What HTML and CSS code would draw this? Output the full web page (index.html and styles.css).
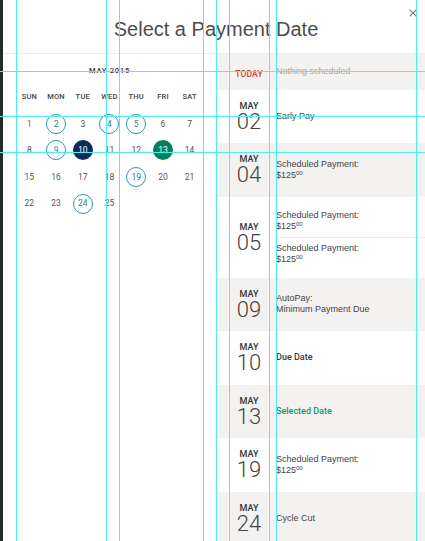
FILE: index.html
```html
<!DOCTYPE html>
<html lang="en">
<head>
<meta charset="utf-8">
<title>Select a Payment Date</title>
<link rel="stylesheet" href="styles.css">
</head>
<body>
<div class="modal">
  <header class="modal-header">
    <span class="spacer"></span>
    <h1 class="title">Select a Payment Date</h1>
    <button class="close" aria-label="Close">
      <svg width="8" height="8" viewBox="0 0 8 8"><path d="M0.6 0.6L7.4 7.4M7.4 0.6L0.6 7.4" stroke="#7a7a7a" stroke-width="1.1" fill="none"/></svg>
    </button>
  </header>
  <div class="modal-body">
    <section class="calendar">
      <div class="month">MAY 2015</div>
      <div class="cal-grid">
        <div class="wd">SUN</div><div class="wd">MON</div><div class="wd">TUE</div><div class="wd">WED</div><div class="wd">THU</div><div class="wd">FRI</div><div class="wd">SAT</div>
        <div class="day"><span class="num red">1</span></div>
        <div class="day"><span class="num mark">2</span></div>
        <div class="day"><span class="num">3</span></div>
        <div class="day"><span class="num mark">4</span></div>
        <div class="day"><span class="num mark">5</span></div>
        <div class="day"><span class="num">6</span></div>
        <div class="day"><span class="num">7</span></div>
        <div class="day"><span class="num">8</span></div>
        <div class="day"><span class="num mark">9</span></div>
        <div class="day"><span class="num due">10</span></div>
        <div class="day"><span class="num">11</span></div>
        <div class="day"><span class="num">12</span></div>
        <div class="day"><span class="num chosen">13</span></div>
        <div class="day"><span class="num">14</span></div>
        <div class="day"><span class="num">15</span></div>
        <div class="day"><span class="num">16</span></div>
        <div class="day"><span class="num">17</span></div>
        <div class="day"><span class="num">18</span></div>
        <div class="day"><span class="num mark">19</span></div>
        <div class="day"><span class="num">20</span></div>
        <div class="day"><span class="num">21</span></div>
        <div class="day"><span class="num">22</span></div>
        <div class="day"><span class="num">23</span></div>
        <div class="day"><span class="num mark">24</span></div>
        <div class="day"><span class="num">25</span></div>
      </div>
    </section>
    <section class="schedule">
      <div class="row today-row">
        <div class="date"><span class="today-label">TODAY</span></div>
        <div class="events"><div class="event muted">Nothing scheduled</div></div>
      </div>
      <div class="row">
        <div class="date"><span class="d-mon">MAY</span><span class="d-num">02</span></div>
        <div class="events"><div class="event">Early Pay</div></div>
      </div>
      <div class="row">
        <div class="date"><span class="d-mon">MAY</span><span class="d-num">04</span></div>
        <div class="events"><div class="event">Scheduled Payment:<br>$125<sup class="cents">00</sup></div></div>
      </div>
      <div class="row">
        <div class="date"><span class="d-mon">MAY</span><span class="d-num">05</span></div>
        <div class="events">
          <div class="event">Scheduled Payment:<br>$125<sup class="cents">00</sup></div>
          <div class="event">Scheduled Payment:<br>$125<sup class="cents">00</sup></div>
        </div>
      </div>
      <div class="row">
        <div class="date"><span class="d-mon">MAY</span><span class="d-num">09</span></div>
        <div class="events"><div class="event">AutoPay:<br>Minimum Payment Due</div></div>
      </div>
      <div class="row">
        <div class="date"><span class="d-mon">MAY</span><span class="d-num">10</span></div>
        <div class="events"><div class="event strong">Due Date</div></div>
      </div>
      <div class="row">
        <div class="date"><span class="d-mon">MAY</span><span class="d-num">13</span></div>
        <div class="events"><div class="event selected">Selected Date</div></div>
      </div>
      <div class="row">
        <div class="date"><span class="d-mon">MAY</span><span class="d-num">19</span></div>
        <div class="events"><div class="event">Scheduled Payment:<br>$125<sup class="cents">00</sup></div></div>
      </div>
      <div class="row">
        <div class="date"><span class="d-mon">MAY</span><span class="d-num">24</span></div>
        <div class="events"><div class="event">Cycle Cut</div></div>
      </div>
    </section>
  </div>
</div>
<div class="guides" aria-hidden="true">
  <div class="gv gv1"></div><div class="gv gv2"></div><div class="gv gv3"></div>
  <div class="gv gv4"></div><div class="gv gv5"></div><div class="gv gv6"></div>
  <div class="gv gv7"></div><div class="gv gv8"></div><div class="gv gv9"></div>
  <div class="gh gh1"></div><div class="gh gh2"></div><div class="gh gh3"></div>
</div>
</body>
</html>
```

FILE: styles.css
```css
html, body {
  margin: 0;
  height: 100%;
  overflow: hidden;
}
body {
  background: #1f2a2c;
  font-family: "Liberation Sans", Arial, sans-serif;
}
.modal {
  margin-left: 3px;
  width: 426px;
  height: 541px;
  background: #fff;
  overflow: hidden;
}
.modal-header {
  height: 53px;
  border-bottom: 1px solid #ebebeb;
  display: grid;
  grid-template-columns: 1fr auto 1fr;
}
.title {
  margin: 18px 0 0;
  font-size: 20px;
  line-height: 23px;
  font-weight: normal;
  color: #4d4d4d;
  white-space: nowrap;
}
.close {
  justify-self: end;
  align-self: start;
  margin: 9px 12px 0 0;
  padding: 0;
  border: 0;
  background: none;
  width: 8px;
  height: 8px;
  display: block;
}
.close svg { display: block; }

.modal-body {
  display: flex;
}
.calendar {
  width: 213px;
  flex: none;
  box-sizing: border-box;
  padding: 10px 13px 0;
}
.month {
  text-align: center;
  font: 500 7.5px/14px Roboto, sans-serif;
  letter-spacing: 0.8px;
  color: #333;
  margin-bottom: 6px;
}
.cal-grid {
  display: grid;
  grid-template-columns: repeat(7, 1fr);
  grid-auto-rows: 26.6px;
  align-items: center;
  justify-items: center;
}
.wd {
  font: 500 7.5px/10px Roboto, sans-serif;
  color: #444;
  letter-spacing: 0.2px;
}
.num {
  width: 20px;
  height: 20px;
  box-sizing: border-box;
  border-radius: 50%;
  display: flex;
  align-items: center;
  justify-content: center;
  font: 400 8.5px/1 Roboto, sans-serif;
  color: #555;
}
.num.red { color: #c8442b; }
.num.mark {
  border: 1px solid #2d95b6;
  color: #1b7fa3;
}
.num.due {
  background: #0c2b5c;
  color: #fff;
}
.num.chosen {
  background: #00805f;
  color: #fff;
}

.schedule {
  flex: 1;
}
.row {
  display: flex;
  align-items: center;
  min-height: 53.5px;
}
.row:nth-child(odd) { background: #f3f2f0; }
.row.today-row { min-height: 35.5px; }
.date {
  flex: none;
  width: 40px;
  margin-left: 13px;
  text-align: center;
}
.d-mon {
  display: block;
  font: 500 9px/10px Roboto, sans-serif;
  color: #333;
}
.d-num {
  display: block;
  font: 300 22px/21px Roboto, sans-serif;
  color: #444;
}
.today-label {
  font: 500 8.5px/11px Roboto, sans-serif;
  color: #c8442b;
  letter-spacing: 0.2px;
}
.events {
  flex: 1;
  margin-left: 7px;
}
.event {
  padding: 5px 0;
  font-size: 9px;
  line-height: 11px;
  color: #444;
}
.event:first-child { padding-top: 13px; }
.event:last-child { padding-bottom: 13px; }
.event + .event { border-top: 1px solid #e9e9e9; }
.today-row .event { padding: 0; }
.event.muted { color: #a8a6a3; }
.event.strong { font-family: Roboto, sans-serif; font-weight: 500; color: #3a3a3a; }
.event.selected { font-family: Roboto, sans-serif; font-weight: 500; color: #0a9b78; }
.cents {
  font-size: 6px;
  line-height: 0;
  vertical-align: 3px;
}

.guides {
  position: fixed;
  inset: 0;
  pointer-events: none;
}
.gv, .gh {
  position: absolute;
  background: #4cf0f0;
}
.gv { top: 0; bottom: 0; width: 1px; }
.gh { left: 0; right: 0; height: 1px; }
.gv1 { left: 16px; }
.gv2 { left: 106px; }
.gv3 { left: 119px; }
.gv4 { left: 203px; }
.gv5 { left: 216px; }
.gv6 { left: 229px; }
.gv7 { left: 269px; }
.gv8 { left: 276px; }
.gv9 { left: 416px; }
.gh1 { top: 71px; }
.gh2 { top: 116px; }
.gh3 { top: 152px; }
```
